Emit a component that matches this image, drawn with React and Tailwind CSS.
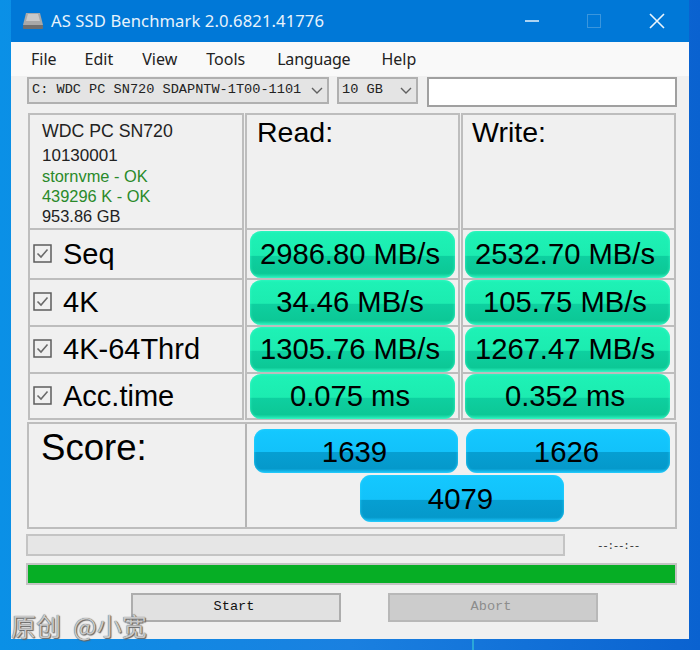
const sans = "font-['Liberation_Sans',Arial,sans-serif]";
const ui = "font-['Noto_Sans',sans-serif]";
const mono = "font-['Liberation_Mono',monospace]";

function Glossy({ kind, className = "", children }) {
  const bg =
    kind === "green"
      ? "bg-[linear-gradient(180deg,#1ef2b6_0%,#1cecb0_52%,#0ed0a0_53%,#0cc896_90%,#2cf0bc_100%)] shadow-[inset_0_0_3px_#3ffac8] pr-[5px] pt-px w-[205px] text-[29.2px]"
      : "bg-[linear-gradient(180deg,#14c8ff_0%,#12c2fa_52%,#069fd2_53%,#0599cb_90%,#1fc6fb_100%)] shadow-[inset_0_0_3px_#2fd4ff] pr-[3px] pt-px w-[204px] text-[29.4px]";
  return (
    <div className={`${bg} ${sans} ${className} rounded-[11px] flex items-center justify-center text-black leading-none`}>
      {children}
    </div>
  );
}

function Check() {
  return (
    <svg width="19" height="19" viewBox="0 0 19 19" className="shrink-0 -mt-[2px]">
      <rect x="1" y="1" width="17" height="17" fill="#f0f0f0" stroke="#5c5c5c" strokeWidth="1.5" />
      <path d="M4.5 9.5 L8 13 L14.5 5.5" fill="none" stroke="#6a6a6a" strokeWidth="1.6" />
    </svg>
  );
}

function Chevron() {
  return (
    <svg width="12" height="7" viewBox="0 0 12 7" className="shrink-0">
      <path d="M1 1 L6 6 L11 1" fill="none" stroke="#606060" strokeWidth="1.4" />
    </svg>
  );
}

function DriveIcon() {
  return (
    <svg width="22" height="18" viewBox="0 0 22 18" className="shrink-0">
      <path d="M4 1 H18 L21 13 H1 Z" fill="#a8a8a8" />
      <path d="M6 2 H16 L18 9 H4 Z" fill="#c9c9c9" />
      <rect x="1" y="13" width="20" height="4" rx="1" fill="#6f6f6f" />
    </svg>
  );
}

const line = "border-t-2 border-l-2 border-r-2 border-[#bdbdbd]";

const rows = [
  ["Seq", "2986.80 MB/s", "2532.70 MB/s", "h-[50px]", "h-[47px]"],
  ["4K", "34.46 MB/s", "105.75 MB/s", "h-[47px]", "h-[45px]"],
  ["4K-64Thrd", "1305.76 MB/s", "1267.47 MB/s", "h-[47px]", "h-[45px]"],
  ["Acc.time", "0.075 ms", "0.352 ms", "h-[48px]", "h-[45px]"],
];

export default function App() {
  return (
    <div className="relative w-[700px] h-[650px] overflow-hidden bg-[linear-gradient(90deg,#0a90e6_0%,#1a80e0_50%,#0a62d0_100%)] pl-[11px]">
      <div className="w-[678px] h-[639px] bg-[#f0f0f0] flex flex-col">
        {/* title bar */}
        <div className="h-[42px] bg-[#0078d7] flex items-center pl-[11px] text-white shrink-0">
          <DriveIcon />
          <span className={`${ui} ml-[7px] text-[16.6px] tracking-[0.1px] text-[#e8f3fc]`}>AS SSD Benchmark 2.0.6821.41776</span>
          <div className="ml-auto flex items-center">
            <svg width="16" height="16" viewBox="0 0 16 16" className="mr-[47px]"><path d="M1 8 H15" stroke="#d8ecfa" strokeWidth="1.6" /></svg>
            <svg width="14" height="14" viewBox="0 0 14 14" className="mr-[48px]"><rect x="0.5" y="0.5" width="13" height="13" fill="none" stroke="#3a96dd" /></svg>
            <svg width="16" height="16" viewBox="0 0 16 16" className="mr-[24px]"><path d="M1 1 L15 15 M15 1 L1 15" stroke="#eaf5fd" strokeWidth="1.6" /></svg>
          </div>
        </div>

        {/* menu */}
        <div className={`${ui} h-[34px] shrink-0 bg-[#f9f9f9] flex items-center pl-[20px] gap-[28px] text-[16px] text-[#222]`}>
          <span>File</span>
          <span>Edit</span>
          <span className="ml-[1px]">View</span>
          <span className="ml-[1px]">Tools</span>
          <span className="ml-[4px] -tracking-[0.2px]">Language</span>
          <span className="ml-[3px]">Help</span>
        </div>

        {/* selectors */}
        <div className="flex items-start pl-[16px] pt-px h-[37px] shrink-0">
          <div className={`${mono} w-[302px] h-[27px] bg-[#e4e4e4] border-2 border-[#b0b0b0] flex items-center pl-[3px] pr-[4px] justify-between text-[13.6px] text-[#222]`}>
            <span className="whitespace-pre">C: WDC PC SN720 SDAPNTW-1T00-1101</span>
            <Chevron />
          </div>
          <div className={`${mono} ml-[8px] w-[81px] h-[27px] bg-[#e4e4e4] border-2 border-[#b0b0b0] flex items-center pl-[3px] pr-[4px] justify-between text-[13.6px] text-[#222]`}>
            <span className="whitespace-pre">10 GB</span>
            <Chevron />
          </div>
          <div className="ml-[9px] w-[250px] h-[30px] bg-white border-2 border-[#a0a0a0]" />
        </div>

        {/* table */}
        <div className="pl-[17px] flex flex-col shrink-0">
          <div className="grid grid-cols-[216px_215px_215px] gap-x-px">
            <div className={`${line} ${sans} h-[115px] pl-[12px] pt-[4px] text-[16.4px] text-[#222] leading-[20px]`}>
              <div className="text-[17.7px] leading-[24px] mb-[2px]">WDC PC SN720</div>
              <div className="text-[17px] leading-[21px]">10130001</div>
              <div className="text-[#2a8a2a]">stornvme - OK</div>
              <div className="text-[#2a8a2a]">439296 K - OK</div>
              <div>953.86 GB</div>
            </div>
            <div className={`${line} ${sans} h-[115px] pl-[10px] text-[28.5px] text-black leading-[34px]`}>Read:</div>
            <div className={`${line} ${sans} h-[115px] pl-[9px] text-[28.5px] text-black leading-[34px]`}>Write:</div>

            {rows.map(([label, read, write, h, bh], i) => (
              <div key={label} className="contents">
                <div className={`${line} ${h} ${i === 3 ? "border-b-2" : ""} flex items-center pl-[3px] gap-[11px]`}>
                  <Check />
                  <span className={`${sans} text-[29px] text-black leading-none`}>{label}</span>
                </div>
                <div className={`${line} ${h} ${i === 3 ? "border-b-2" : ""} flex items-center justify-center`}>
                  <Glossy kind="green" className={bh}>{read}</Glossy>
                </div>
                <div className={`${line} ${h} ${i === 3 ? "border-b-2" : ""} flex items-center justify-center pr-[2px]`}>
                  <Glossy kind="green" className={bh}>{write}</Glossy>
                </div>
              </div>
            ))}
          </div>
        </div>

        {/* score */}
        <div className="ml-[16px] mt-[2px] w-[650px] h-[107px] border-2 border-[#bdbdbd] grid grid-cols-[218px_1fr] shrink-0">
          <div className={`${sans} border-r-2 border-[#b5b5b5] pl-[12px] pt-px text-[36.6px] leading-[46px] text-black`}>Score:</div>
          <div className="flex flex-wrap justify-center content-start gap-x-[8px] gap-y-[2px] pt-[5px] pl-[2px]">
            <Glossy kind="blue" className="h-[44px]">1639</Glossy>
            <Glossy kind="blue" className="h-[44px]">1626</Glossy>
            <Glossy kind="blue" className="h-[47px]">4079</Glossy>
          </div>
        </div>

        {/* progress */}
        <div className="ml-[15px] mt-[5px] flex items-center shrink-0">
          <div className="w-[539px] h-[22px] bg-[#e6e6e6] border-2 border-[#c4c4c4]" />
          <span className={`${mono} ml-[32px] text-[11px] tracking-[-1.35px] text-[#333] leading-none mt-[3px]`}>--:--:--</span>
        </div>
        <div className="ml-[15px] mt-[7px] w-[651px] h-[22px] bg-[#06ae25] border-2 border-[#c4c4c4] shrink-0" />

        {/* buttons */}
        <div className="ml-[120px] mt-[8px] flex shrink-0">
          <div className={`${mono} w-[210px] h-[29px] bg-[#e1e1e1] border-2 border-[#adadad] flex items-center justify-center pr-[4px] text-[13.6px] text-[#111]`}>Start</div>
          <div className={`${mono} ml-[47px] w-[210px] h-[29px] bg-[#cccccc] border-2 border-[#b8b8b8] flex items-center justify-center pr-[4px] text-[13.6px] text-[#8c8c8c]`}>Abort</div>
        </div>
      </div>

      {/* details over the backdrop */}
      <div className="absolute left-[472px] top-[639px] w-[2px] h-[11px] bg-[#2ba7d8]" />

      {/* watermark */}
      <div className="absolute left-[11px] top-[609px] flex font-['Noto_Sans_CJK_SC',sans-serif] text-[25px] leading-[32px] text-[#c8c8c8] whitespace-pre [text-shadow:0_0_1px_#444,1px_1px_1px_#666]">
        <span>原创</span>
        <span className="ml-[12px]">@小宽</span>
      </div>
    </div>
  );
}
